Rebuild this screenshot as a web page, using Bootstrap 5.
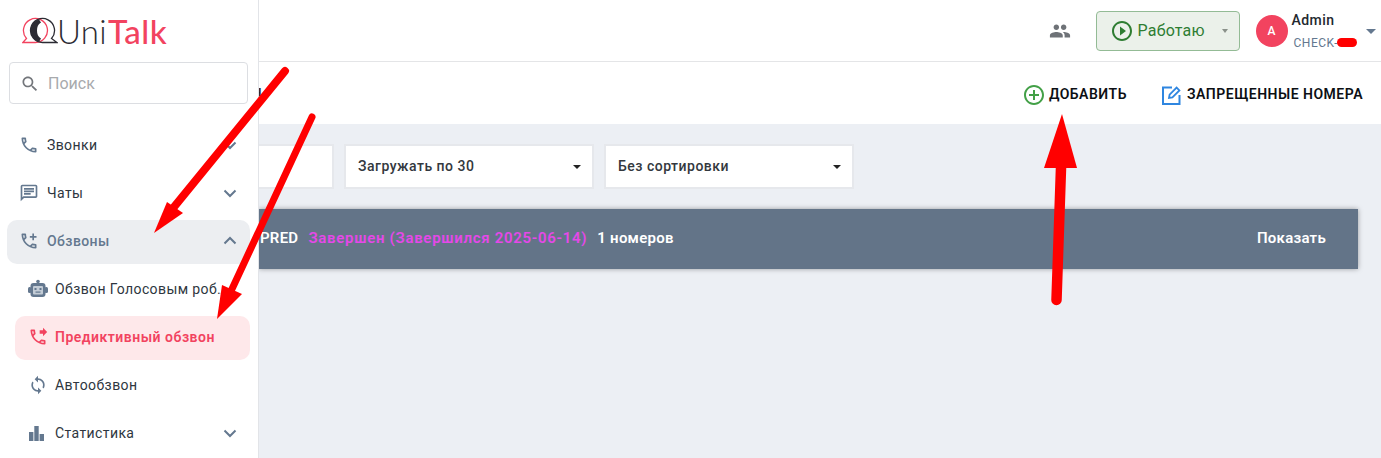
<!DOCTYPE html>
<html lang="ru">
<head>
<meta charset="utf-8">
<title>UniTalk</title>
<link href="https://cdn.jsdelivr.net/npm/bootstrap@5.3.0/dist/css/bootstrap.min.css" rel="stylesheet">
<style>
html,body{height:458px;overflow:hidden}
body{font-family:Roboto,"Liberation Sans",sans-serif;background:#eceff4;color:#212b36;position:relative}
.ut-shell{width:1381px;height:458px}
.ut-side{width:259px;flex:none;background:#fff;border-right:1px solid #e2e4e8;height:458px;overflow:hidden}
.ut-logo{height:62px;padding-left:22px;padding-top:15px;gap:0}
.ut-logo svg{margin-right:-1px}
.ut-logotext{font-family:Lato,sans-serif;font-size:33px;line-height:34px;color:#2b2b33;font-weight:300;letter-spacing:.3px;margin-top:-1px}
.ut-logotext b{color:#f2435f;font-weight:500;letter-spacing:.5px;margin-left:1px}
.ut-search{margin:0 10px 0 9px;height:42px;border:1px solid #dcdee2;border-radius:4px;padding-left:10px;gap:8px;color:#a8aaad;font-size:16px;padding-top:1px}
.ut-search svg{fill:#73767b}
.ut-menu{margin-top:20px}
.ut-item{height:44px;margin:0 8px 4px 7px;padding:0 10px 0 12px;border-radius:10px;font-size:14px;letter-spacing:.4px;color:#2e3640;padding-bottom:2px}
.ut-item svg.ic{width:20px;height:20px;fill:#64788f;flex:none;margin-right:8px}
.ut-sub{margin-left:15px;padding-left:12px}
.ut-sub svg.ic{margin-right:7px;margin-left:1px}
.ut-open{background:#eceef1;color:#64788f;font-weight:500}
.ut-active{background:#fee8ea;color:#f2435f;font-weight:600;letter-spacing:.5px}
.ut-active svg.ic{fill:#f2435f}
.ut-chev{width:20px;height:20px;fill:none;stroke:#64788f;stroke-width:2;margin-left:auto;flex:none}
.ut-nowrap{white-space:nowrap}
.ut-main{min-width:0}
.ut-top{height:62px;background:#fff;border-bottom:1px solid #e4e5e7;padding-right:5px;padding-top:1px}
.ut-people{width:22px;height:22px;fill:#6e7277;margin-right:25px}
.ut-work{width:144px;height:40px;background:#ebf1ea;border:1px solid #93bb95;border-radius:4px;color:#2e7d32;font-size:16px;letter-spacing:.2px;padding-left:15px;gap:6px;margin-right:16px}
.ut-work svg{width:20px;height:20px;fill:#2e7d32;flex:none}
.ut-workcaret{width:0;height:0;border-left:3.5px solid transparent;border-right:3.5px solid transparent;border-top:4px solid #8a918a;margin-left:auto;margin-right:11px}
.ut-ava{width:32px;height:32px;border-radius:50%;background:#f2435f;color:#fff;font-size:12px;font-weight:500;margin-right:4px}
.ut-who{margin-top:-2px}
.ut-name{font-size:14px;font-weight:500;line-height:20px;color:#23282f;letter-spacing:.45px}
.ut-org{font-size:12px;line-height:16px;color:#64788f;margin-top:5px;padding-left:2px;gap:0;letter-spacing:.5px}
.ut-blob{width:20px;height:9px;border-radius:5px;background:#f00;display:inline-block;margin-left:-1px}
.ut-usercaret{width:0;height:0;border-left:5px solid transparent;border-right:5px solid transparent;border-top:5px solid #64788f;margin-left:9px}
.ut-subhead{height:62px;background:#fff;padding:3px 18px 0 0}
.ut-peek{font-size:15px;font-weight:500;color:#23282f;margin-left:-6px;margin-right:auto;margin-top:-6px}
.ut-act{font-size:14px;font-weight:600;color:#0c0f14;letter-spacing:.5px;gap:5px}
.ut-act svg{width:20px;height:20px;flex:none}
.ut-act + .ut-act{margin-left:35px}
.ut-filters{margin-top:20px;gap:10px}
.ut-box{height:45px;background:#fff;border:2px solid #e6e8ec;font-size:14px;font-weight:500;color:#33383e;padding:0 11px 0 12px;letter-spacing:.5px}
.ut-w1{width:80px;margin-left:-5px}
.ut-w2{width:250px}
.ut-caret{width:0;height:0;border-left:4px solid transparent;border-right:4px solid transparent;border-top:4px solid #222;margin-left:auto}
.ut-bar{height:60px;margin-top:20px;margin-right:23px;background:#637488;box-shadow:0 0 5px rgba(0,0,0,.35);color:#fff;font-size:15px;font-weight:600;padding:0 32px 1px 1px;letter-spacing:.25px}
.ut-status{color:#e548e8;margin:0 10px;letter-spacing:.7px}
.ut-more{margin-left:auto}
.ut-arrows{position:absolute;left:0;top:0;width:1381px;height:458px;pointer-events:none}
</style>
</head>
<body>
<div class="ut-shell d-flex">
  <aside class="ut-side">
    <div class="ut-logo d-flex align-items-start">
      <svg width="36" height="30" viewBox="0 0 36 30" aria-hidden="true">
        <path d="M13 27.500H.8l3.700-4A12 12 0 1 1 13 27.500" fill="none" stroke="#f2435f" stroke-width="1.300"/>
        <path d="M21 27.500h14l-5.500-4A12 12 0 1 0 21 27.500" fill="none" stroke="#2b2b33" stroke-width="1.300"/>
        <path d="M17 4.500C11 6 8.500 11 8.500 15.500s2.500 9.500 8.500 11.500l2-3.500c-3-1.500-4-4.500-4-8s1-6.500 4-8z" fill="#2b2b33"/>
      </svg>
      <div class="ut-logotext">Uni<b>Talk</b></div>
    </div>
    <div class="ut-search d-flex align-items-center">
      <svg width="20" height="20" viewBox="0 0 24 24"><path d="M15.500 14h-.79l-.28-.27C15.410 12.590 16 11.110 16 9.500 16 5.910 13.090 3 9.500 3S3 5.910 3 9.500 5.910 16 9.500 16c1.610 0 3.090-.59 4.230-1.570l.27.28v.79l5 4.990L20.490 19l-4.990-5zm-6 0C7.010 14 5 11.990 5 9.500S7.010 5 9.500 5 14 7.010 14 9.500 11.990 14 9.500 14z"/></svg>
      <span>Поиск</span>
    </div>
    <nav class="ut-menu">
      <div class="ut-item d-flex align-items-center">
        <svg class="ic" viewBox="0 0 24 24"><path d="M6.540 5c.06.89.21 1.760.45 2.590l-1.200 1.200c-.41-1.200-.67-2.470-.76-3.790h1.510m9.860 12.020c.85.24 1.720.39 2.600.45v1.490c-1.320-.09-2.590-.35-3.800-.75l1.200-1.190M7.500 3H4c-.55 0-1 .45-1 1 0 9.390 7.610 17 17 17 .55 0 1-.45 1-1v-3.490c0-.55-.45-1-1-1-1.240 0-2.450-.2-3.570-.57-.1-.04-.21-.05-.31-.05-.26 0-.51.1-.71.29l-2.200 2.200c-2.830-1.450-5.150-3.760-6.590-6.590l2.200-2.200c.28-.28.36-.67.25-1.020C8.700 6.450 8.500 5.250 8.500 4c0-.55-.45-1-1-1z"/></svg>
        <span>Звонки</span>
        <svg class="ut-chev" viewBox="0 0 20 20"><path d="M4.500 7.500l5.500 5.500 5.500-5.500"/></svg>
      </div>
      <div class="ut-item d-flex align-items-center">
        <svg class="ic" viewBox="0 0 24 24"><path d="M20 2H4c-1.100 0-2 .9-2 2v18l4-4h14c1.100 0 2-.9 2-2V4c0-1.100-.9-2-2-2zm0 14H5.170L4 17.170V4h16v12zM6 12h8v2H6zM6 9h12v2H6zM6 6h12v2H6z"/></svg>
        <span>Чаты</span>
        <svg class="ut-chev" viewBox="0 0 20 20"><path d="M4.500 7.500l5.500 5.500 5.500-5.500"/></svg>
      </div>
      <div class="ut-item ut-open d-flex align-items-center">
        <svg class="ic" viewBox="0 0 24 24"><path d="M6.540 5c.06.89.21 1.760.45 2.590l-1.200 1.200c-.41-1.200-.67-2.470-.76-3.790h1.510m9.860 12.020c.85.24 1.720.39 2.600.45v1.490c-1.320-.09-2.590-.35-3.800-.75l1.200-1.190M7.500 3H4c-.55 0-1 .45-1 1 0 9.390 7.610 17 17 17 .55 0 1-.45 1-1v-3.490c0-.55-.45-1-1-1-1.240 0-2.450-.2-3.570-.57-.1-.04-.21-.05-.31-.05-.26 0-.51.1-.71.29l-2.200 2.200c-2.830-1.450-5.150-3.760-6.590-6.590l2.200-2.200c.28-.28.36-.67.25-1.020C8.700 6.450 8.500 5.250 8.500 4c0-.55-.45-1-1-1zM21 6h-3V3h-2v3h-3v2h3v3h2V8h3z"/></svg>
        <span>Обзвоны</span>
        <svg class="ut-chev" viewBox="0 0 20 20"><path d="M4.500 12.500L10 7l5.500 5.500"/></svg>
      </div>
      <div class="ut-item ut-sub d-flex align-items-center">
        <svg class="ic" viewBox="0 0 20 20">
          <circle cx="10" cy="2.500" r="1.800"/>
          <rect x="2.500" y="4" width="15" height="14" rx="3"/>
          <rect x="0" y="8" width="3.500" height="6" rx="1.500"/>
          <rect x="16.500" y="8" width="3.500" height="6" rx="1.500"/>
          <rect x="5" y="7" width="10" height="8.500" rx="1" fill="#c3ccd6"/>
          <rect x="6.500" y="9" width="2" height="2"/>
          <rect x="11.500" y="9" width="2" height="2"/>
          <rect x="7.500" y="12.500" width="5" height="1.200"/>
        </svg>
        <span class="ut-nowrap">Обзвон Голосовым роб…</span>
      </div>
      <div class="ut-item ut-sub ut-active d-flex align-items-center">
        <svg class="ic" viewBox="0 0 24 24"><path d="M6.540 5c.06.89.21 1.760.45 2.590l-1.200 1.200c-.41-1.200-.67-2.470-.76-3.790h1.510m9.860 12.020c.85.24 1.720.39 2.600.45v1.490c-1.320-.09-2.590-.35-3.800-.75l1.200-1.190M7.500 3H4c-.55 0-1 .45-1 1 0 9.390 7.610 17 17 17 .55 0 1-.45 1-1v-3.490c0-.55-.45-1-1-1-1.240 0-2.450-.2-3.570-.57-.1-.04-.21-.05-.31-.05-.26 0-.51.1-.71.29l-2.200 2.200c-2.830-1.450-5.150-3.760-6.590-6.590l2.200-2.200c.28-.28.36-.67.25-1.020C8.700 6.450 8.500 5.250 8.500 4c0-.55-.45-1-1-1zM18 11l5-5-5-5v3h-4v4h4v3z"/></svg>
        <span>Предиктивный обзвон</span>
      </div>
      <div class="ut-item ut-sub d-flex align-items-center">
        <svg class="ic" viewBox="0 0 24 24"><path d="M12 4V1L8 5l4 4V6c3.310 0 6 2.690 6 6 0 1.010-.25 1.970-.7 2.800l1.460 1.460C19.540 15.030 20 13.570 20 12c0-4.420-3.580-8-8-8zm0 14c-3.310 0-6-2.690-6-6 0-1.010.25-1.970.7-2.800L5.240 7.740C4.460 8.970 4 10.430 4 12c0 4.420 3.580 8 8 8v3l4-4-4-4v3z"/></svg>
        <span>Автообзвон</span>
      </div>
      <div class="ut-item ut-sub d-flex align-items-center">
        <svg class="ic" viewBox="0 0 20 20"><rect x="1" y="9" width="4.400" height="9"/><rect x="6.300" y="3" width="4.400" height="15"/><rect x="11.600" y="11" width="4.400" height="7"/></svg>
        <span>Статистика</span>
        <svg class="ut-chev" viewBox="0 0 20 20"><path d="M4.500 7.500l5.500 5.500 5.500-5.500"/></svg>
      </div>
    </nav>
  </aside>
  <main class="ut-main flex-grow-1 overflow-hidden">
    <header class="ut-top d-flex align-items-center justify-content-end">
      <svg class="ut-people" viewBox="0 0 24 24"><path d="M16 11c1.660 0 2.990-1.340 2.990-3S17.660 5 16 5c-1.660 0-3 1.340-3 3s1.340 3 3 3zm-8 0c1.660 0 2.990-1.340 2.990-3S9.660 5 8 5C6.340 5 5 6.340 5 8s1.340 3 3 3zm0 2c-2.330 0-7 1.170-7 3.500V19h14v-2.500c0-2.330-4.670-3.500-7-3.500zm8 0c-.29 0-.62.02-.97.05 1.160.84 1.970 1.970 1.970 3.450V19h6v-2.500c0-2.330-4.670-3.500-7-3.500z"/></svg>
      <div class="ut-work d-flex align-items-center">
        <svg viewBox="2 2 20 20"><path d="M10 16.500l6-4.500-6-4.500v9zM12 2C6.480 2 2 6.480 2 12s4.480 10 10 10 10-4.480 10-10S17.520 2 12 2zm0 18c-4.410 0-8-3.590-8-8s3.590-8 8-8 8 3.590 8 8-3.590 8-8 8z"/></svg>
        <span>Работаю</span>
        <span class="ut-workcaret"></span>
      </div>
      <div class="ut-ava d-flex align-items-center justify-content-center">A</div>
      <div class="ut-who">
        <div class="ut-name">Admin</div>
        <div class="ut-org d-flex align-items-center">CHECK-<span class="ut-blob"></span></div>
      </div>
      <span class="ut-usercaret"></span>
    </header>
    <section class="ut-subhead d-flex align-items-center justify-content-end">
      <span class="ut-peek">н</span>
      <div class="ut-act d-flex align-items-center">
        <svg viewBox="2 2 20 20" fill="#43a047"><path d="M13 7h-2v4H7v2h4v4h2v-4h4v-2h-4V7zm-1-5C6.480 2 2 6.480 2 12s4.480 10 10 10 10-4.480 10-10S17.520 2 12 2zm0 18c-4.410 0-8-3.590-8-8s3.590-8 8-8 8 3.590 8 8-3.590 8-8 8z"/></svg>
        <span>ДОБАВИТЬ</span>
      </div>
      <div class="ut-act d-flex align-items-center">
        <svg viewBox="0 0 20 20" fill="none" stroke="#2f86e0" stroke-width="2"><path d="M10 2.500H1V19h16.500v-9"/><path d="M7 13l.6-3.400 7-7 2.800 2.800-7 7z" stroke-width="1.800"/></svg>
        <span>ЗАПРЕЩЕННЫЕ НОМЕРА</span>
      </div>
    </section>
    <div class="ut-filters d-flex">
      <div class="ut-box ut-w1"></div>
      <div class="ut-box ut-w2 d-flex align-items-center"><span>Загружать по 30</span><span class="ut-caret"></span></div>
      <div class="ut-box ut-w2 d-flex align-items-center"><span>Без сортировки</span><span class="ut-caret"></span></div>
    </div>
    <div class="ut-bar d-flex align-items-center">
      <span>PRED</span>
      <span class="ut-status">Завершен (Завершился 2025-06-14)</span>
      <span>1 номеров</span>
      <span class="ut-more">Показать</span>
    </div>
  </main>
</div>
<svg class="ut-arrows" viewBox="0 0 1381 458" aria-hidden="true">
  <g fill="#f00" stroke="none">
    <path d="M154 233L167 202 183 213z"/>
    <path d="M174 207L285 71" stroke="#f00" stroke-width="8" stroke-linecap="round" fill="none"/>
    <path d="M217 319L222 285 242 294z"/>
    <path d="M232 289L312 117" stroke="#f00" stroke-width="7" stroke-linecap="round" fill="none"/>
    <path d="M1062 114L1044 168H1077z"/>
    <path d="M1061 168L1056.500 300" stroke="#f00" stroke-width="10.500" stroke-linecap="round" fill="none"/>
  </g>
</svg>
</body>
</html>
